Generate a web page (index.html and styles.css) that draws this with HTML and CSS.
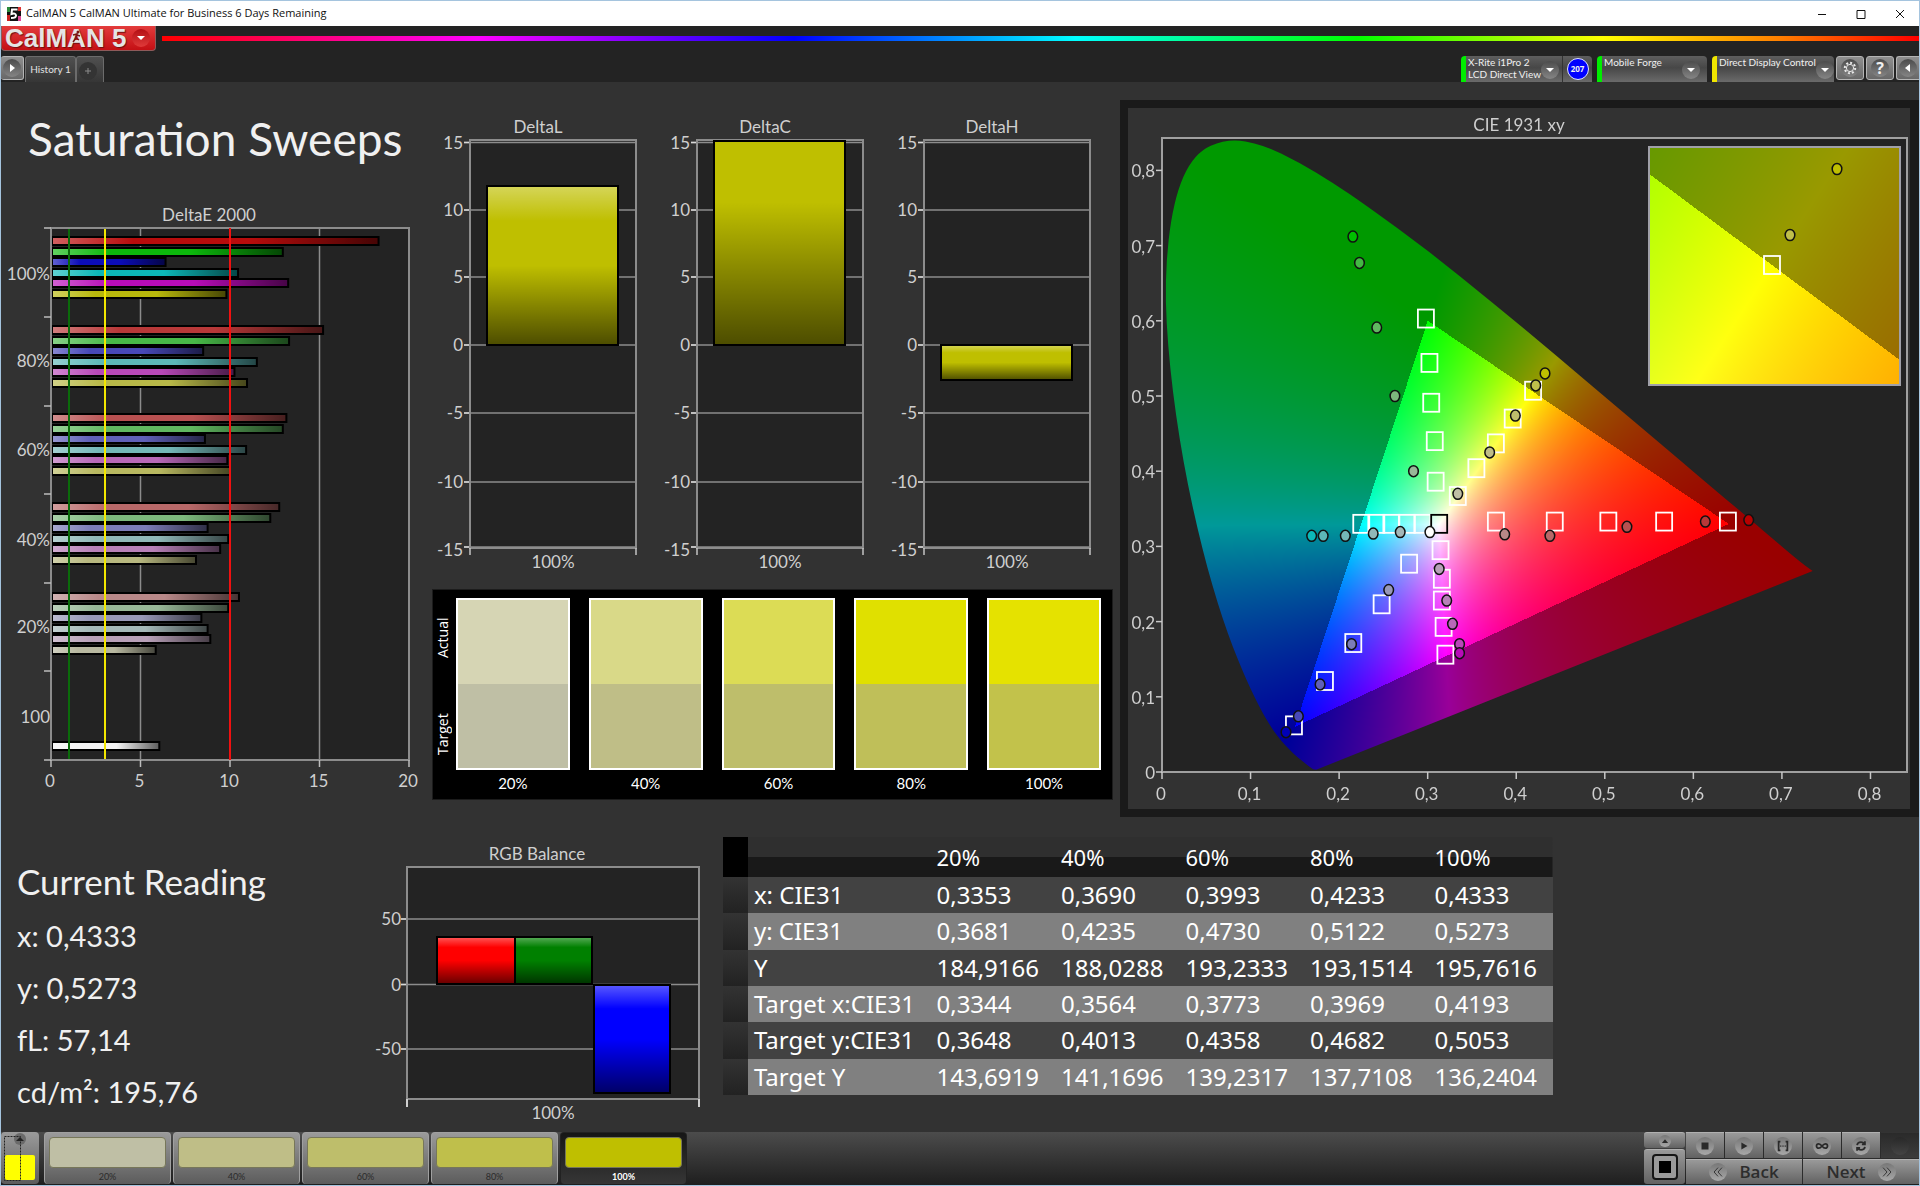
FILE: index.html
```html
<!DOCTYPE html>
<html lang="en">
<head>
<meta charset="utf-8">
<title>CalMAN 5 CalMAN Ultimate for Business 6 Days Remaining</title>
<link rel="stylesheet" href="styles.css">
</head>
<body>
<svg class="defs" aria-hidden="true">
  <defs>
    <linearGradient id="shade-x" x1="0" x2="1" y1="0" y2="0">
      <stop offset="0" stop-color="#fff" stop-opacity=".35"/>
      <stop offset=".25" stop-color="#fff" stop-opacity="0"/>
      <stop offset=".6" stop-color="#000" stop-opacity="0"/>
      <stop offset="1" stop-color="#000" stop-opacity=".62"/>
    </linearGradient>
    <linearGradient id="shade-y" x1="0" x2="0" y1="0" y2="1">
      <stop offset="0" stop-color="#fff" stop-opacity=".35"/>
      <stop offset=".22" stop-color="#fff" stop-opacity="0"/>
      <stop offset=".5" stop-color="#000" stop-opacity="0"/>
      <stop offset="1" stop-color="#000" stop-opacity=".6"/>
    </linearGradient>
    <linearGradient id="shade-flat" x1="0" x2="0" y1="0" y2="1">
      <stop offset=".3" stop-color="#000" stop-opacity="0"/>
      <stop offset="1" stop-color="#000" stop-opacity=".6"/>
    </linearGradient>
  </defs>
</svg>

<header class="titlebar">
  <svg class="app-icon" viewBox="0 0 14 14" aria-hidden="true">
    <rect width="14" height="14" fill="#111"/>
    <path d="M0 0h3v5H0z" fill="#2a8a3a"/><path d="M0 8h3v6H0z" fill="#c22"/><path d="M11 0h3v4h-3z" fill="#d33"/><path d="M11 9h3v5h-3z" fill="#e0489a"/>
    <path d="M10.500 2.500H5L4.500 7q4-1.500 4.500 1.500Q9 11 4 11" fill="none" stroke="#fff" stroke-width="2"/>
  </svg>
  <span class="titlebar-text">CalMAN 5 CalMAN Ultimate for Business 6 Days Remaining</span>
  <div class="window-buttons">
    <button type="button" aria-label="Minimize"><svg viewBox="0 0 10 10"><path d="M1 5.500h8"/></svg></button>
    <button type="button" aria-label="Maximize"><svg viewBox="0 0 10 10"><path d="M1 1.500h8v8H1z"/></svg></button>
    <button type="button" aria-label="Close"><svg viewBox="0 0 10 10"><path d="M1 1l8 8M9 1l-8 8"/></svg></button>
  </div>
</header>

<div class="brandbar">
  <button type="button" class="brand">
    <span class="brand-name">CalMAN 5</span>
    <svg class="runner" viewBox="0 0 12 14" aria-hidden="true"><circle cx="8" cy="2" r="1.500" fill="#7a1414"/><path d="M3 5l4-1-1 4 3 2M6 8l-3 4M7 5l3 1" fill="none" stroke="#7a1414" stroke-width="1.500"/></svg>
    <span class="brand-arrow knob"><svg viewBox="0 0 16 16"><path d="M4 6h8l-4 4z"/></svg></span>
  </button>
  <div class="rainbow"></div>
</div>

<nav class="tabbar">
  <button type="button" class="square-button edge-left" aria-label="Expand"><span class="knob"><svg viewBox="0 0 16 16"><path d="M6 4v8l5-4z"/></svg></span></button>
  <button type="button" class="tab">History 1</button>
  <button type="button" class="tab tab-add" aria-label="Add tab"><span class="knob"><svg viewBox="0 0 16 16"><path d="M8 5v6M5 8h6"/></svg></span></button>
  <div class="devices">
    <button type="button" class="device meter"><span class="device-text">X-Rite i1Pro 2<br>LCD Direct View</span><span class="knob"><svg viewBox="0 0 16 16"><path d="M4 6h8l-4 4z"/></svg></span></button>
    <span class="badge-box"><span class="badge">207</span></span>
    <button type="button" class="device source"><span class="device-text">Mobile Forge</span><span class="knob"><svg viewBox="0 0 16 16"><path d="M4 6h8l-4 4z"/></svg></span></button>
    <button type="button" class="device display"><span class="device-text">Direct Display Control</span><span class="knob"><svg viewBox="0 0 16 16"><path d="M4 6h8l-4 4z"/></svg></span></button>
    <button type="button" class="square-button" aria-label="Settings"><span class="knob"><svg viewBox="0 0 16 16" class="gear"><circle cx="8" cy="8" r="3.600"/><circle cx="8" cy="8" r="5.200" class="teeth"/></svg></span></button>
    <button type="button" class="square-button" aria-label="Help"><span class="knob help">?</span></button>
    <button type="button" class="square-button edge-right" aria-label="Collapse"><span class="knob"><svg viewBox="0 0 16 16"><path d="M10 4v8L5 8z"/></svg></span></button>
  </div>
</nav>

<main>
  <section class="top-row">
    <div class="sweeps">
      <h1>Saturation Sweeps</h1>
      <svg class="chart" id="delta-e" viewBox="0 0 430 600" role="img" aria-label="DeltaE 2000"></svg>
    </div>
    <div class="middle">
      <div class="deltas">
        <svg class="chart" id="delta-l" viewBox="0 0 227 462" role="img" aria-label="DeltaL"></svg>
        <svg class="chart" id="delta-c" viewBox="0 0 227 462" role="img" aria-label="DeltaC"></svg>
        <svg class="chart" id="delta-h" viewBox="0 0 227 462" role="img" aria-label="DeltaH"></svg>
      </div>
      <div class="swatches">
        <div class="swatch-sides"><span>Actual</span><span>Target</span></div>
        <div class="swatch"><div class="pair s20"></div><span>20%</span></div>
        <div class="swatch"><div class="pair s40"></div><span>40%</span></div>
        <div class="swatch"><div class="pair s60"></div><span>60%</span></div>
        <div class="swatch"><div class="pair s80"></div><span>80%</span></div>
        <div class="swatch"><div class="pair s100"></div><span>100%</span></div>
      </div>
    </div>
    <div class="cie-panel">
      <canvas id="cie-colors" width="782" height="701"></canvas>
      <svg class="chart" id="cie" viewBox="0 0 782 701" role="img" aria-label="CIE 1931 xy"></svg>
    </div>
  </section>

  <section class="bottom-row">
    <div class="reading">
      <h2>Current Reading</h2>
      <p>x: 0,4333</p>
      <p>y: 0,5273</p>
      <p>fL: 57,14</p>
      <p>cd/m²: 195,76</p>
    </div>
    <svg class="chart" id="rgb" viewBox="0 0 333 290" role="img" aria-label="RGB Balance"></svg>
    <table>
      <colgroup><col class="c-mark"><col class="c-label"><col><col><col><col><col></colgroup>
      <thead>
        <tr><td></td><td></td><th scope="col">20%</th><th scope="col">40%</th><th scope="col">60%</th><th scope="col">80%</th><th scope="col">100%</th></tr>
      </thead>
      <tbody>
        <tr><td></td><th scope="row">x: CIE31</th><td>0,3353</td><td>0,3690</td><td>0,3993</td><td>0,4233</td><td>0,4333</td></tr>
        <tr><td></td><th scope="row">y: CIE31</th><td>0,3681</td><td>0,4235</td><td>0,4730</td><td>0,5122</td><td>0,5273</td></tr>
        <tr><td></td><th scope="row">Y</th><td>184,9166</td><td>188,0288</td><td>193,2333</td><td>193,1514</td><td>195,7616</td></tr>
        <tr><td></td><th scope="row">Target x:CIE31</th><td>0,3344</td><td>0,3564</td><td>0,3773</td><td>0,3969</td><td>0,4193</td></tr>
        <tr><td></td><th scope="row">Target y:CIE31</th><td>0,3648</td><td>0,4013</td><td>0,4358</td><td>0,4682</td><td>0,5053</td></tr>
        <tr><td></td><th scope="row">Target Y</th><td>143,6919</td><td>141,1696</td><td>139,2317</td><td>137,7108</td><td>136,2404</td></tr>
      </tbody>
    </table>
  </section>
</main>

<footer>
  <button type="button" class="current-color" aria-label="Current color">
    <svg viewBox="0 0 38 52"><circle cx="19" cy="7" r="6" fill="#6a6a6a"/><path d="M15 9h8l-4-4z" fill="#222"/><rect x="4" y="23" width="30" height="25" rx="2" fill="#ff0"/><path d="M3.500 4.500h16v44h-16z" fill="none" stroke="#222" stroke-dasharray="2 1"/></svg>
  </button>
  <div class="steps">
    <button type="button" class="step p20"><i></i>20%</button>
    <button type="button" class="step p40"><i></i>40%</button>
    <button type="button" class="step p60"><i></i>60%</button>
    <button type="button" class="step p80"><i></i>80%</button>
    <button type="button" class="step p100 selected"><i></i>100%</button>
  </div>
  <div class="controls">
    <div class="stop-stack">
      <button type="button" class="metal" aria-label="More"><span class="knob small"><svg viewBox="0 0 16 16"><path d="M3 11h10L8 5z"/></svg></span></button>
      <button type="button" class="metal" aria-label="Stop pattern"><svg class="stop-big" viewBox="0 0 26 26"><rect x="1" y="1" width="24" height="24" rx="3" fill="#9a9a9a" stroke="#151515" stroke-width="2"/><rect x="7" y="7" width="12" height="12" fill="#000"/></svg></button>
    </div>
    <div class="transport">
      <button type="button" class="metal" aria-label="Stop"><span class="knob"><svg viewBox="0 0 16 16"><path d="M4 4h8v8H4z"/></svg></span></button>
      <button type="button" class="metal" aria-label="Play"><span class="knob"><svg viewBox="0 0 16 16"><path d="M5 4v8l7-4z"/></svg></span></button>
      <button type="button" class="metal" aria-label="Range"><span class="knob"><svg viewBox="0 0 16 16" class="line"><path d="M5 3H3v10h2M11 3h2v10h-2M5 8h1M7.500 8h1M10 8h1"/></svg></span></button>
      <button type="button" class="metal" aria-label="Loop"><span class="knob"><svg viewBox="0 0 16 16" class="line"><path d="M8 8C6 5.500 5 5.500 4.200 5.500a2.500 2.500 0 000 5C5 10.500 6 10.500 8 8s3-2.500 3.800-2.500a2.500 2.500 0 010 5C11 10.500 10 10.500 8 8z"/></svg></span></button>
      <button type="button" class="metal" aria-label="Refresh"><span class="knob"><svg viewBox="0 0 16 16" class="line"><path d="M3.500 7Q4 3.500 8 3.500q2.500 0 4 2M12.500 2.500v3.500H9M12.500 9q-.5 3.500-4.500 3.500-2.500 0-4-2M3.500 13.500V10H7"/></svg></span></button>
      <button type="button" class="metal off" aria-label="Record" disabled><span class="knob"></span></button>
      <button type="button" class="metal wide"><span class="knob"><svg viewBox="0 0 16 16" class="line thin"><path d="M8 3L3.500 8 8 13M12.500 3L8 8l4.500 5"/></svg></span>Back</button>
      <button type="button" class="metal wide">Next<span class="knob"><svg viewBox="0 0 16 16" class="line thin"><path d="M3.500 3L8 8l-4.500 5M8 3l4.500 5L8 13"/></svg></span></button>
    </div>
  </div>
</footer>
<script src="charts.js"></script>
</body>
</html>
```
FILE: styles.css
```css
* { box-sizing: border-box; }

body {
  margin: 0;
  min-height: 100vh;
  display: flex;
  flex-direction: column;
  border: 1px solid #a5c4de;
  background: #323232;
  color: #f0f0f0;
  font-family: Lato, "Liberation Sans", sans-serif;
  overflow-x: hidden;
}

button {
  margin: 0;
  padding: 0;
  border: 0;
  background: none;
  color: inherit;
  font: inherit;
}

h1, h2, p { margin: 0; font-weight: 400; }

.defs { position: absolute; width: 0; height: 0; }

/* window title */
.titlebar {
  height: 25px;
  display: flex;
  align-items: center;
  gap: 5px;
  padding-left: 6px;
  background: #fff;
  color: #111;
}
.app-icon { width: 14px; height: 14px; }
.titlebar-text { font: 11px/24px "Open Sans", sans-serif; height: 25px; }
.window-buttons { margin-left: auto; display: flex; }
.window-buttons button { width: 39px; height: 25px; display: grid; place-items: center; }
.window-buttons svg { width: 10px; height: 10px; fill: none; stroke: #111; }

/* logo and spectrum line */
.brandbar { height: 30px; display: flex; gap: 6px; background: #232323; }
.brand {
  position: relative;
  width: 155px;
  height: 25px;
  display: flex;
  align-items: center;
  padding: 0 5px 0 3px;
  border: 1px solid #8d5a5a;
  border-top: 0;
  border-radius: 0 0 4px 4px;
  background: linear-gradient(#e33c3c, #c40f14);
}
.brand-name {
  font: bold 26px/20px "Liberation Sans", sans-serif;
  color: #e4e4e4;
  text-shadow: 1px 1px 1px #6d1010;
  white-space: nowrap;
}
.runner { position: absolute; left: 68px; top: 4px; width: 12px; height: 14px; }
.brand-arrow { margin-left: auto; }
.rainbow {
  flex: 1;
  height: 5px;
  margin-top: 10px;
  background: linear-gradient(90deg, #f00, #f0f 18%, #00f 36%, #0ff 52%, #0f0 68%, #ff0 82%, #ff8000 92%, #f00);
}

.knob {
  width: 18px;
  height: 18px;
  flex: none;
  display: grid;
  place-items: center;
  border-radius: 50%;
  background: linear-gradient(#4c4c4c, #858585);
}
.knob svg { width: 16px; height: 16px; fill: #fff; }
.brand .knob { background: linear-gradient(#b30f14, #e03a3a); }

/* tabs and devices */
.tabbar {
  height: 26px;
  display: flex;
  align-items: flex-end;
  background: #232323;
  font-size: 10px;
}
.square-button {
  width: 28px;
  height: 24px;
  display: grid;
  place-items: center;
  align-self: flex-start;
  border: 1px solid #b5b5b5;
  border-radius: 3px;
  background: linear-gradient(#8f8f8f, #686868);
}
.edge-left { width: 23px; border-left: 0; margin-right: 1px; }
.edge-right { width: 23px; border-right: 0; border-radius: 3px 0 0 3px; }
.tab {
  width: 51px;
  height: 26px;
  padding-bottom: 2px;
  border: 1px solid #6c6c6c;
  border-bottom: 0;
  border-radius: 3px 3px 0 0;
  background: linear-gradient(#505050, #363636);
  color: #e2e2e2;
}
.tab-add { width: 28px; padding: 2px 4px 0 0; display: grid; place-items: center; }
.tab-add .knob { background: #343434; }
.tab-add .knob svg { stroke: #8a8a8a; }
.devices { margin-left: auto; height: 26px; display: flex; }
.device {
  height: 26px;
  display: flex;
  padding: 0 7px 0 2px;
  border-left: 5px solid #0e0;
  border-radius: 4px 4px 0 0;
  background: linear-gradient(#5e5e5e, #474747 45%, #6a6a6a);
}
.device .knob { margin: 5px 0 0 auto; }
.device-text { line-height: 12px; text-align: left; white-space: nowrap; }
.meter { width: 101px; border-radius: 4px 0 0 0; }
.source { width: 110px; margin-left: 5px; }
.display { width: 122px; padding-right: 3px; margin: 0 2px 0 5px; border-left-color: #f0e600; }
.square-button + .square-button { margin-left: 2px; }
.badge-box {
  width: 30px;
  display: grid;
  place-items: center;
  border-left: 1px solid #333;
  border-radius: 0 4px 0 0;
  background: linear-gradient(#5e5e5e, #474747 45%, #6a6a6a);
}
.badge {
  width: 22px;
  height: 22px;
  border: 1px solid #dfe3ff;
  border-radius: 50%;
  background: #00f;
  font: bold 8px/20px "Open Sans", sans-serif;
  text-align: center;
}
.knob .gear { fill: none; stroke: #e8e8e8; stroke-width: 1; }
.gear .teeth { stroke-dasharray: 2 2; stroke-width: 2; }
.help { font: bold 16px/18px "Open Sans", sans-serif; }

/* main area */
main { flex: 1; }
.chart { display: block; width: 100%; height: auto; overflow: visible; font-size: 17px; }
.chart text { fill: #cfcfcf; }
.top-row {
  display: grid;
  grid-template-columns: 430fr 689fr 799fr;
  align-items: start;
  margin-bottom: 20px;
}
.top-row > *, .bottom-row > * { min-width: 0; }
h1 { padding: 30px 0 29px 27px; font-size: 46px; line-height: 54px; white-space: nowrap; }
.middle { padding: 31px 7px 0 1px; }
.deltas { display: grid; grid-template-columns: repeat(3, 1fr); }
.swatches {
  display: grid;
  grid-template-columns: 23px repeat(4, 133fr) 125fr;
  margin-top: 14px;
  padding: 8px 0 7px;
  border: 1px solid #1c1c1c;
  background: #000;
  color: #fff;
}
.swatch-sides { display: grid; grid-template-rows: 80px 112px; padding-right: 4px; }
.swatch-sides span {
  display: grid;
  place-items: center;
  writing-mode: vertical-rl;
  rotate: 180deg;
  font: 14px/16px "Open Sans", sans-serif;
}
.swatch { text-align: center; font-size: 15px; line-height: 18px; padding-right: 19px; }
.swatch:last-child { padding-right: 11px; }
.pair { height: 172px; margin-bottom: 4px; border: 2px solid #fff; }
.s20 { background: linear-gradient(#d6d5b4 50%, #bfbfa5 50%); }
.s40 { background: linear-gradient(#d9d988 50%, #bfbe87 50%); }
.s60 { background: linear-gradient(#dcdc55 50%, #bebe6b 50%); }
.s80 { background: linear-gradient(#e0e000 50%, #bfbf59 50%); }
.s100 { background: linear-gradient(#e5e200 50%, #c2c24b 50%); }
.cie-panel {
  position: relative;
  margin-top: 18px;
  border: 8px solid #1a1a1a;
  border-right-width: 9px;
}
.cie-panel canvas { position: absolute; inset: 0; width: 100%; height: 100%; }
.cie-panel .chart { position: relative; }

.bottom-row {
  display: grid;
  grid-template-columns: 389fr 333fr 830fr 366fr;
  align-items: start;
  padding-bottom: 4px;
}
.reading { padding: 24px 0 0 16px; white-space: nowrap; }
.reading h2 { margin-bottom: 9px; font-size: 35px; line-height: 40px; }
.reading p { font-size: 29px; line-height: 52px; }

table {
  width: 100%;
  height: 258px;
  table-layout: fixed;
  border-collapse: collapse;
  font: 24px/28px "Noto Sans", sans-serif;
  color: #fff;
}
.c-mark { width: 3%; }
.c-label { width: 22%; }
thead tr { height: 40px; font-size: 22px; background: linear-gradient(#2f2f2f 0 50%, #191919 50% 100%); }
thead td:first-child { background: #000; }
th, td { padding: 0 0 0 6px; text-align: left; font-weight: 400; white-space: nowrap; }
tbody tr { background: #424242; }
tbody tr:nth-child(even) { background: #808080; }
tbody td:first-child { background: linear-gradient(#333, #222); }

/* footer */
footer {
  height: 53px;
  display: flex;
  align-items: flex-start;
  background: linear-gradient(#4c4c4c, #1e1e1e);
}
.current-color {
  width: 38px;
  height: 52px;
  margin-right: 5px;
  border-radius: 4px;
  background: linear-gradient(#9b9b9b, #5c5c5c);
}
.current-color svg { display: block; width: 38px; height: 52px; }
.steps { display: flex; gap: 2px; }
.step {
  width: 127px;
  height: 52px;
  display: grid;
  grid-template-rows: 31px 1fr;
  padding: 4px 4px 0;
  border: solid #a0a0a0;
  border-width: 1px 1px 0;
  border-radius: 4px;
  background: linear-gradient(#9a9a9a, #5c5c5c);
  color: #2b2b2b;
  font-size: 9px;
  line-height: 17px;
}
.step i { border: 1px solid #77775a; border-radius: 4px; }
.step.selected { border-color: #222; background: linear-gradient(#161616, #363636); color: #fff; font-weight: 700; }
.p20 i { background: #bfbfa5; }
.p40 i { background: #bfbe87; }
.p60 i { background: #bebe6b; }
.p80 i { background: #bfbf4b; }
.p100 i { background: #bfbf00; }

.controls { margin-left: auto; display: flex; gap: 1px; color: #2d2d2d; }
.metal {
  display: flex;
  align-items: center;
  justify-content: center;
  border-top: 1px solid #b0b0b0;
  background: linear-gradient(#999, #626262);
}
.metal .knob { background: linear-gradient(#777, #a8a8a8); }
.metal .knob svg { width: 14px; height: 14px; fill: #2a2a2a; }
.metal .knob .line { fill: none; stroke: #2a2a2a; stroke-width: 2; }
.metal .knob .thin { stroke-width: 1; }
.stop-stack { width: 41px; display: grid; grid-template-rows: 16px 35px; gap: 1px; }
.stop-stack .metal { border-radius: 3px; }
.metal .small { width: 12px; height: 12px; }
.metal .small svg { width: 10px; height: 10px; }
.stop-big { width: 26px; height: 26px; }
.transport {
  display: grid;
  grid-template-columns: repeat(6, 38px);
  grid-template-rows: 26px 25px;
  gap: 1px;
  background: #2c2c2c;
}
.wide { grid-column: span 3; gap: 12px; font: 600 17px/20px "Open Sans", sans-serif; }
.metal.off { border-color: #333; background: linear-gradient(#2a2a2a, #3c3c3c); }
.metal.off .knob { background: linear-gradient(#282828, #444); }
```
FILE: charts.js
```js
const NS = 'http://www.w3.org/2000/svg';

function add(parent, tag, attrs, text) {
  const node = document.createElementNS(NS, tag);
  for (const key in attrs) node.setAttribute(key, attrs[key]);
  if (text !== undefined) node.textContent = text;
  parent.appendChild(node);
  return node;
}
const line = (svg, x1, y1, x2, y2, stroke = '#8c8c8c', width = 2) =>
  add(svg, 'line', { x1, y1, x2, y2, stroke, 'stroke-width': width });
const label = (svg, x, y, text, anchor = 'middle') =>
  add(svg, 'text', { x, y, 'text-anchor': anchor }, text);
const plot = (svg, x, y, w, h) =>
  add(svg, 'rect', { x, y, width: w, height: h, fill: '#232323' });
const frame = (svg, x, y, w, h) =>
  add(svg, 'rect', { x, y, width: w, height: h, fill: 'none', stroke: '#8c8c8c', 'stroke-width': 2 });
function bar(svg, x, y, w, h, fill, shade) {
  add(svg, 'rect', { x, y, width: w, height: h, fill });
  add(svg, 'rect', { x, y, width: w, height: h, fill: `url(#${shade})`, stroke: '#000', 'stroke-width': 2 });
}

/* DeltaE 2000 */
(function () {
  const svg = document.getElementById('delta-e');
  const left = 50, top = 33, bottom = 565, unit = 17.9;
  plot(svg, left, top, 358, bottom - top);
  label(svg, 208, 26, 'DeltaE 2000');
  for (const v of [5, 10, 15]) line(svg, left + v * unit, top, left + v * unit, bottom, '#8c8c8c', 1.5);
  const groups = [
    [42, [18.3, 12.95, 6.4, 10.45, 13.25, 9.8], ['#b80c0c', '#0cb80c', '#0c0cb8', '#0cb8b8', '#b80cb8', '#b8b80c']],
    [131, [15.2, 13.3, 8.5, 11.5, 10.25, 10.95], ['#b83838', '#48b848', '#4848b8', '#5cb8b8', '#b848b8', '#b8b848']],
    [219, [13.15, 12.95, 8.6, 10.9, 9.85, 10], ['#b85050', '#60b860', '#6060b8', '#74b8b8', '#b868b8', '#b8b860']],
    [308, [12.75, 12.25, 8.75, 9.9, 9.45, 8.1], ['#b86868', '#7cb87c', '#7c7cb8', '#90b8b8', '#b880b8', '#b8b880']],
    [398, [10.5, 9.9, 8.4, 8.75, 8.9, 5.85], ['#b88888', '#98b898', '#9898b8', '#a4b8b8', '#b8a0b8', '#b8b8a0']],
    [547, [6.05], ['#f2f2f2']]
  ];
  for (const [y, values, colors] of groups) {
    values.forEach((v, i) => bar(svg, left + 1, y + Math.round(i * 10.5), v * unit - 1, 8, colors[i], 'shade-x'));
  }
  line(svg, left + 18, top, left + 18, bottom, '#0a6b0a');
  line(svg, left + 54, top, left + 54, bottom, '#f2e600');
  frame(svg, left, top, 358, bottom - top);
  line(svg, left + 179, top, left + 179, bottom, '#f01010');
  [33, 122, 211, 299, 388, 476, 565].forEach(y => line(svg, left - 7, y, left, y, '#bdbdbd', 1.5));
  [[85, '100%'], [172, '80%'], [261, '60%'], [351, '40%'], [438, '20%'], [528, '100']]
    .forEach(([y, t]) => label(svg, 49, y, t, 'end'));
  for (const v of [0, 5, 10, 15, 20]) {
    line(svg, left + v * unit, bottom, left + v * unit, bottom + 7, '#bdbdbd', 1.5);
    label(svg, left + v * unit - 1, 592, String(v));
  }
})();

/* DeltaL, DeltaC, DeltaH */
function delta(id, title, barTop, barHeight, shade) {
  const svg = document.getElementById(id);
  const left = 38, width = 166;
  plot(svg, left, 27, width, 408);
  label(svg, 106, 20, title);
  [[15, 29.5], [10, 97], [5, 164], [0, 232], [-5, 300], [-10, 369], [-15, 434]].forEach(([v, y]) => {
    line(svg, left - 6, y, left + width, y, '#8c8c8c', 1.5);
    line(svg, left - 6, y, left, y, '#d8d8d8', 1.5);
    label(svg, left - 7, v === -15 ? y + 9 : y + 6, String(v), 'end');
  });
  frame(svg, left, 27, width, 408);
  bar(svg, 55, barTop, 131, barHeight, '#bfbf00', shade);
  line(svg, left, 435, left, 442, '#c4c4c4', 1.5);
  line(svg, left + width, 435, left + width, 442, '#c4c4c4', 1.5);
  label(svg, 121, 455, '100%');
}
delta('delta-l', 'DeltaL', 73, 159, 'shade-y');
delta('delta-c', 'DeltaC', 28, 204, 'shade-flat');
delta('delta-h', 'DeltaH', 232, 35, 'shade-y');

/* RGB Balance */
(function () {
  const svg = document.getElementById('rgb');
  const left = 17, right = 309;
  plot(svg, left, 30, 292, 232);
  label(svg, 147, 23, 'RGB Balance');
  [[50, 82], [0, 147.5], [-50, 212]].forEach(([v, y]) => {
    line(svg, left - 6, y, right, y, '#8c8c8c', 1.5);
    line(svg, left - 6, y, left, y, '#d8d8d8', 1.5);
    label(svg, left - 6, y + 6, String(v), 'end');
  });
  frame(svg, left, 30, 292, 232);
  bar(svg, 47, 100, 78, 47, '#ff0000', 'shade-y');
  bar(svg, 125, 100, 77, 47, '#008000', 'shade-y');
  bar(svg, 204, 148, 76, 108, '#0000ff', 'shade-y');
  line(svg, left, 262, left, 270, '#d0d0d0');
  line(svg, right, 262, right, 270, '#d0d0d0');
  label(svg, 163, 282, '100%');
})();

/* CIE 1931 xy */
(function () {
  const svg = document.getElementById('cie');
  const ctx = document.getElementById('cie-colors').getContext('2d');
  const X0 = 34, Y0 = 664, SX = 885.6, SY = 752;
  const px = x => X0 + x * SX, py = y => Y0 - y * SY;
  const inset = { x: 521, y: 39, w: 251, h: 238, cx: 644, cy: 157, sx: 4640, sy: 4340 };
  const locus = [[.1741, .003], [.1714, .003], [.1689, .005], [.1644, .009], [.1566, .0165], [.151, .0217],
    [.144, .0297], [.1355, .0399], [.1241, .0578], [.1096, .0868], [.0913, .1327], [.0687, .2007], [.0454, .295],
    [.0235, .4127], [.0082, .5384], [.0025, .6548], [.0125, .7602], [.0359, .823], [.0743, .8428], [.1142, .8342],
    [.1547, .8109], [.1929, .7836], [.2296, .7543], [.3016, .6923], [.3731, .6245], [.4441, .5547], [.5125, .4866],
    [.5752, .4242], [.627, .3725], [.6658, .334], [.6915, .3083], [.719, .2809], [.7347, .2673]];

  /* sRGB colour of a chromaticity, at full brightness inside the gamut and dimmed outside */
  function color(x, y) {
    const X = x / y, Z = (1 - x - y) / y;
    const rgb = [3.2406 * X - 1.5372 - .4986 * Z, -.9689 * X + 1.8758 + .0415 * Z, .0557 * X - .204 + 1.057 * Z];
    const inside = Math.min(...rgb) >= 0;
    const max = Math.max(...rgb);
    return rgb.map(c => 255 * (inside ? 1 : .6) * Math.max(0, c) / max);
  }
  function paint(x, y, w, h, toXY) {
    const image = ctx.createImageData(w, h);
    for (let j = 0; j < h; j++) {
      for (let i = 0; i < w; i++) {
        const [cx, cy] = toXY(x + i + .5, y + j + .5);
        const [r, g, b] = color(cx, Math.max(cy, .0005));
        image.data.set([r, g, b, 255], (j * w + i) * 4);
      }
    }
    const layer = document.createElement('canvas');
    layer.width = w;
    layer.height = h;
    layer.getContext('2d').putImageData(image, 0, 0);
    ctx.drawImage(layer, x, y);
  }

  ctx.fillStyle = '#232323';
  ctx.fillRect(X0, 30, 745, 634);
  ctx.save();
  /* smooth outline through the midpoints of the locus */
  ctx.beginPath();
  ctx.moveTo(px(locus[0][0]), py(locus[0][1]));
  for (let i = 1; i < locus.length - 1; i++) {
    const [ax, ay] = locus[i], [bx, by] = locus[i + 1];
    ctx.quadraticCurveTo(px(ax), py(ay), px((ax + bx) / 2), py((ay + by) / 2));
  }
  const end = locus[locus.length - 1];
  ctx.lineTo(px(end[0]), py(end[1]));
  ctx.closePath();
  ctx.clip();
  paint(X0, 30, 745, 634, (x, y) => [(x - X0) / SX, (Y0 - y) / SY]);
  ctx.restore();
  paint(inset.x, inset.y, inset.w, inset.h,
    (x, y) => [.4193 + (x - inset.cx) / inset.sx, .5053 - (y - inset.cy) / inset.sy]);

  add(svg, 'rect', { x: X0, y: 30, width: 745, height: 634, fill: 'none', stroke: '#a0a0a0', 'stroke-width': 2 });
  add(svg, 'rect', { x: inset.x, y: inset.y, width: inset.w, height: inset.h, fill: 'none', stroke: '#a0a0a8', 'stroke-width': 2 });
  label(svg, 391, 23, 'CIE 1931 xy');
  for (let i = 0; i <= 8; i++) {
    const t = i ? '0,' + i : '0';
    line(svg, px(i / 10), Y0, px(i / 10), Y0 + 7, '#c8c8c8', 1.5);
    label(svg, px(i / 10) - 1, 692, t);
    line(svg, X0 - 6, py(i / 10), X0, py(i / 10), '#c8c8c8', 1.5);
    label(svg, X0 - 7, py(i / 10) + 7, t, 'end');
  }

  const square = (x, y, stroke = '#fff') =>
    add(svg, 'rect', { x: x - 8, y: y - 9, width: 16, height: 18, fill: 'none', stroke, 'stroke-width': 1.8 });
  const dot = (x, y, fill) =>
    add(svg, 'ellipse', { cx: x, cy: y, rx: 4.8, ry: 5.5, fill, stroke: '#111', 'stroke-width': 1.5 });

  [[.298, .603], [.302, .544], [.304, .491], [.308, .44], [.309, .386],
    [.419, .507], [.396, .47], [.377, .437], [.355, .404], [.334, .367],
    [.377, .333], [.4435, .333], [.504, .333], [.567, .333], [.639, .333],
    [.225, .33], [.242, .33], [.259, .33], [.2765, .33], [.294, .33],
    [.3145, .295], [.316, .257], [.316, .228], [.318, .193], [.32, .156],
    [.279, .277], [.248, .223], [.216, .1715], [.184, .121], [.149, .062]
  ].forEach(([x, y]) => square(px(x), py(y)));
  square(px(.313), py(.33), '#000');

  [[.2155, .712, '#00c000'], [.223, .677, '#44b844'], [.2425, .591, '#60b860'], [.263, .5, '#7cb87c'], [.284, .4, '#98b898'],
    [.4325, .53, '#bfbf00'], [.422, .514, '#bfbf4b'], [.399, .474, '#bebe6b'], [.37, .425, '#bfbe87'], [.334, .37, '#bfbfa5'],
    [.6625, .335, '#b80000'], [.6135, .333, '#b83838'], [.525, .326, '#b85050'], [.438, .314, '#b86868'], [.387, .316, '#b88888'],
    [.169, .314, '#0cb8b8'], [.182, .314, '#5cb8b8'], [.207, .314, '#74b8b8'], [.2385, .317, '#90b8b8'], [.269, .319, '#a4b8b8'],
    [.3025, .319, '#ffffff'],
    [.336, .17, '#b848b8'], [.336, .158, '#b80cb8'], [.328, .197, '#b868b8'], [.3215, .228, '#b880b8'], [.313, .27, '#b8a0b8'],
    [.14, .053, '#0000b8'], [.154, .074, '#4848b8'], [.1785, .1165, '#6060b8'], [.214, .17, '#7c7cb8'], [.256, .242, '#9898b8']
  ].forEach(([x, y, c]) => dot(px(x), py(y), c));

  square(inset.cx, inset.cy);
  dot(709, 61, '#bfbf00');
  dot(662, 127, '#bfbf4b');
})();
```
